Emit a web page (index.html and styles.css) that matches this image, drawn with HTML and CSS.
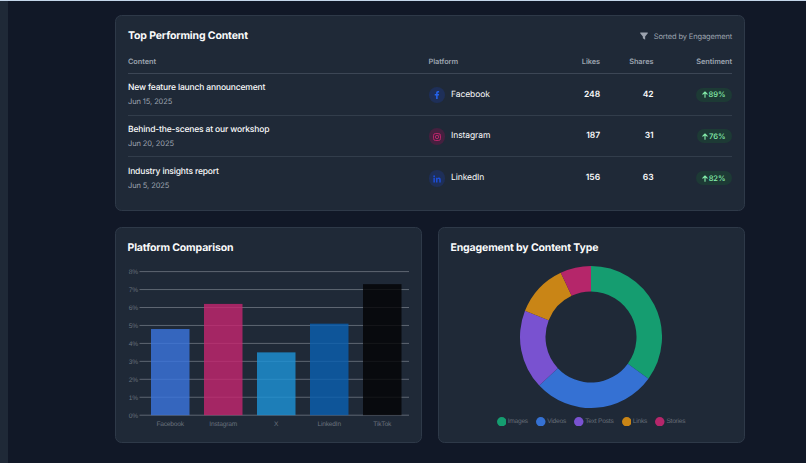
FILE: index.html
```html
<!DOCTYPE html>
<html lang="en">
<head>
  <meta charset="UTF-8" />
  <meta name="viewport" content="width=device-width, initial-scale=1" />
  <title>Content Performance</title>
  <link rel="stylesheet" href="styles.css">
</head>
<body>
  <aside class="sidebar"></aside>

  <main class="content">
    <section class="card top-content">
      <div class="card-header">
        <h2>Top Performing Content</h2>
        <div class="sorted">
          <svg class="filter-icon" viewBox="0 0 16 16"><path d="M1 1h14c.8 0 1.100.9.6 1.600L10.300 9v6.500L5.700 12.500V9L.4 2.600C-.1 1.900.2 1 1 1z" /></svg>
          <span>Sorted by Engagement</span>
        </div>
      </div>

      <table>
        <colgroup>
          <col class="col-content" />
          <col class="col-platform" />
          <col class="col-shares" />
          <col class="col-sentiment" />
        </colgroup>
        <thead>
          <tr>
            <th>Content</th>
            <th><div class="split"><span>Platform</span><span>Likes</span></div></th>
            <th class="num">Shares</th>
            <th class="num">Sentiment</th>
          </tr>
        </thead>
        <tbody>
          <tr>
            <td>
              <div class="post-title">New feature launch announcement</div>
              <div class="post-date">Jun 15, 2025</div>
            </td>
            <td>
              <div class="split">
                <div class="platform">
                  <span class="icon facebook"><svg viewBox="0 0 16 16"><path d="M6.200 16V9H3.500V6.200h2.700V4.300C6.200 1.700 7.700.1 10 .1c1.100 0 2.200.2 2.200.2V3h-1.400C9.600 3 9.300 3.700 9.300 4.500v1.700h2.900L11.700 9H9.300v7z" /></svg></span>
                  <span>Facebook</span>
                </div>
                <span class="value">248</span>
              </div>
            </td>
            <td class="num">42</td>
            <td class="num"><span class="badge"><svg viewBox="0 0 12 14"><path d="M6 12.500V2M1.700 6.300 6 2l4.300 4.300" /></svg>89%</span></td>
          </tr>
          <tr>
            <td>
              <div class="post-title">Behind-the-scenes at our workshop</div>
              <div class="post-date">Jun 20, 2025</div>
            </td>
            <td>
              <div class="split">
                <div class="platform">
                  <span class="icon instagram"><svg viewBox="0 0 16 16"><rect x="1" y="1" width="14" height="14" rx="4" /><circle cx="8" cy="8" r="3.300" /><circle class="dot" cx="12" cy="4" r="1" /></svg></span>
                  <span>Instagram</span>
                </div>
                <span class="value">187</span>
              </div>
            </td>
            <td class="num">31</td>
            <td class="num"><span class="badge"><svg viewBox="0 0 12 14"><path d="M6 12.500V2M1.700 6.300 6 2l4.300 4.300" /></svg>76%</span></td>
          </tr>
          <tr>
            <td>
              <div class="post-title">Industry insights report</div>
              <div class="post-date">Jun 5, 2025</div>
            </td>
            <td>
              <div class="split">
                <div class="platform">
                  <span class="icon linkedin"><svg viewBox="0 0 16 16"><circle cx="2.300" cy="2.500" r="1.800" /><path d="M.8 5.500h3V15h-3zM6 5.500h2.900v1.300c.5-.9 1.500-1.600 3-1.600 3 0 3.600 2 3.600 4.600V15h-3v-4.600c0-1.100 0-2.500-1.600-2.500S9 9.100 9 10.300V15H6z" /></svg></span>
                  <span>LinkedIn</span>
                </div>
                <span class="value">156</span>
              </div>
            </td>
            <td class="num">63</td>
            <td class="num"><span class="badge"><svg viewBox="0 0 12 14"><path d="M6 12.500V2M1.700 6.300 6 2l4.300 4.300" /></svg>82%</span></td>
          </tr>
        </tbody>
      </table>
    </section>

    <div class="charts">
      <section class="card">
        <h2>Platform Comparison</h2>
        <svg class="bar-chart" id="barChart" viewBox="0 0 282 170"></svg>
      </section>

      <section class="card">
        <h2>Engagement by Content Type</h2>
        <svg class="donut-chart" id="donutChart" viewBox="-71 -71 142 142"></svg>
        <div class="legend" id="legend"></div>
      </section>
    </div>
  </main>

  <script src="script.js"></script>
</body>
</html>
```
FILE: styles.css
```css
* {
  box-sizing: border-box;
}
body {
  display: flex;
  margin: 0;
  height: 463px;
  overflow: hidden;
  border-top: 1px solid #c4d6ea;
  background: #111827;
  color: #f9fafb;
  font-family: Inter, sans-serif;
  font-size: 8.500px;
  letter-spacing: -0.080px;
  line-height: 13px;
  text-rendering: geometricPrecision;
}
.sidebar {
  flex: none;
  width: 8px;
  background: #1f2937;
}
.content {
  width: 630px;
  margin: 14px 0 0 107px;
}
.card {
  background: #1f2937;
  border: 1px solid #2e3948;
  border-radius: 6.500px;
  padding: 12px;
}
.top-content {
  height: 196px;
}
h2 {
  margin: 0;
  height: 16px;
  font-size: 10.500px;
  font-weight: 650;
  letter-spacing: -0.150px;
  line-height: 15px;
}
.card-header {
  display: flex;
  justify-content: space-between;
  align-items: center;
}
.sorted {
  display: flex;
  align-items: center;
  gap: 5.500px;
  color: #9ca3af;
  font-size: 7.500px;
  letter-spacing: -0.140px;
}
.filter-icon {
  width: 8px;
  height: 8px;
  fill: #9ca3af;
}
table {
  width: 604px;
  margin-top: 3px;
  table-layout: fixed;
  border-collapse: separate;
  border-spacing: 0;
}
.col-content {
  width: 300.500px;
}
.col-platform {
  width: 171.500px;
}
.col-shares {
  width: 53.500px;
}
th {
  height: 27px;
  padding: 2px 0 0;
  border-bottom: 1px solid #3c4655;
  color: #9ca3af;
  font-size: 7.400px;
  font-weight: 600;
  letter-spacing: -0.080px;
  text-align: left;
}
td {
  height: 41.500px;
  padding: 1.500px 0 0;
  border-bottom: 1px solid #323d4b;
}
tr:last-child td {
  border-bottom: none;
}
.num {
  text-align: right;
}
td.num, .value {
  font-weight: 600;
}
.split {
  display: flex;
  align-items: center;
  justify-content: space-between;
}
.post-title {
  font-weight: 550;
  letter-spacing: -0.160px;
}
.post-date {
  color: #9ca3af;
  font-size: 7.500px;
  letter-spacing: -0.100px;
}
.platform {
  display: flex;
  align-items: center;
  gap: 6px;
}
.icon {
  display: flex;
  align-items: center;
  justify-content: center;
  width: 16.500px;
  height: 16.500px;
  border-radius: 50%;
}
.icon svg {
  width: 8px;
  height: 8px;
}
.facebook {
  background: #1e2f58;
  fill: #2563eb;
}
.instagram {
  background: #45203f;
  fill: none;
  stroke: #db2777;
  stroke-width: 1.500;
}
.instagram .dot {
  fill: #db2777;
  stroke: none;
}
.linkedin {
  background: #1e2f58;
  fill: #1d4ed8;
}
.badge {
  display: inline-flex;
  align-items: center;
  gap: 1px;
  height: 14px;
  padding: 0 6.500px 0 5.500px;
  border-radius: 7px;
  background: #1d3a35;
  color: #86efac;
  font-size: 7.600px;
  font-weight: 500;
  letter-spacing: -0.050px;
  vertical-align: middle;
}
.badge svg {
  width: 6px;
  height: 7px;
  fill: none;
  stroke: #86efac;
  stroke-width: 2.200;
  stroke-linecap: round;
  stroke-linejoin: round;
}
.charts {
  display: grid;
  grid-template-columns: 307px 307px;
  gap: 16px;
  margin-top: 16px;
}
.charts .card {
  height: 216px;
  padding: 12px 12.500px 12px 11.500px;
}
.charts h2 {
  line-height: 16px;
}
.bar-chart {
  display: block;
  width: 282px;
  height: 170px;
  margin: 7px 0 0 0.500px;
}
.bar-chart text {
  fill: #69717d;
  font-family: "Liberation Sans", sans-serif;
  font-size: 6.600px;
  letter-spacing: -0.180px;
}
.bar-chart .grid {
  stroke: #5e6672;
}
.bar-chart .bar {
  opacity: 0.8;
}
.donut-chart {
  display: block;
  width: 142px;
  height: 142px;
  margin: 10px auto 0;
}
.legend {
  display: flex;
  justify-content: center;
  gap: 8.300px;
  margin-top: 7.200px;
  color: #666d78;
  font-family: "Liberation Sans", sans-serif;
  font-size: 6.600px;
  letter-spacing: -0.220px;
}
.legend-item {
  display: flex;
  align-items: center;
  gap: 1.500px;
}
.legend-item svg {
  width: 9.500px;
  height: 9.500px;
}
```
FILE: script.js
```js
const platforms = [
  { name: 'Facebook', value: 4.8, color: '#3b76e0' },
  { name: 'Instagram', value: 6.2, color: '#c6256f' },
  { name: 'X', value: 3.5, color: '#1d93d8' },
  { name: 'LinkedIn', value: 5.1, color: '#0a60b2' },
  { name: 'TikTok', value: 7.3, color: '#020304' }
];

const contentTypes = [
  { name: 'Images', value: 35, color: '#159d70' },
  { name: 'Videos', value: 28, color: '#3571d3' },
  { name: 'Text Posts', value: 18, color: '#7952d0' },
  { name: 'Links', value: 12, color: '#c98516' },
  { name: 'Stories', value: 7, color: '#b5266a' }
];

function drawBars() {
  const bottom = 152.2;
  const step = 17.95;
  let out = '';
  for (let i = 0; i <= 8; i++) {
    const y = bottom - i * step;
    out += `<line class="grid" x1="11.5" x2="281" y1="${y}" y2="${y}" />`;
    out += `<text x="10" y="${y + 2.3}" text-anchor="end">${i}%</text>`;
  }
  platforms.forEach((p, i) => {
    const x = 23 + i * 53;
    const h = p.value * step;
    out += `<rect class="bar" x="${x}" y="${bottom - h}" width="38.5" height="${h}" fill="${p.color}" />`;
    out += `<text x="${x + 19.2}" y="163.3" text-anchor="middle">${p.name}</text>`;
  });
  document.getElementById('barChart').innerHTML = out;
}

function drawDonut() {
  const outer = 71;
  const inner = 45.5;
  const point = (r, t) => {
    const a = t / 100 * 2 * Math.PI;
    return `${r * Math.sin(a)} ${-r * Math.cos(a)}`;
  };
  let start = 0;
  let out = '';
  contentTypes.forEach((c) => {
    const end = start + c.value;
    out += `<path fill="${c.color}" d="M${point(outer, start)} A${outer} ${outer} 0 0 1 ${point(outer, end)} L${point(inner, end)} A${inner} ${inner} 0 0 0 ${point(inner, start)} Z" />`;
    start = end;
  });
  document.getElementById('donutChart').innerHTML = out;
  document.getElementById('legend').innerHTML = contentTypes.map((c) =>
    `<span class="legend-item"><svg viewBox="0 0 10 10"><circle cx="5" cy="5" r="5" fill="${c.color}" /></svg>${c.name}</span>`
  ).join('');
}

drawBars();
drawDonut();
```
